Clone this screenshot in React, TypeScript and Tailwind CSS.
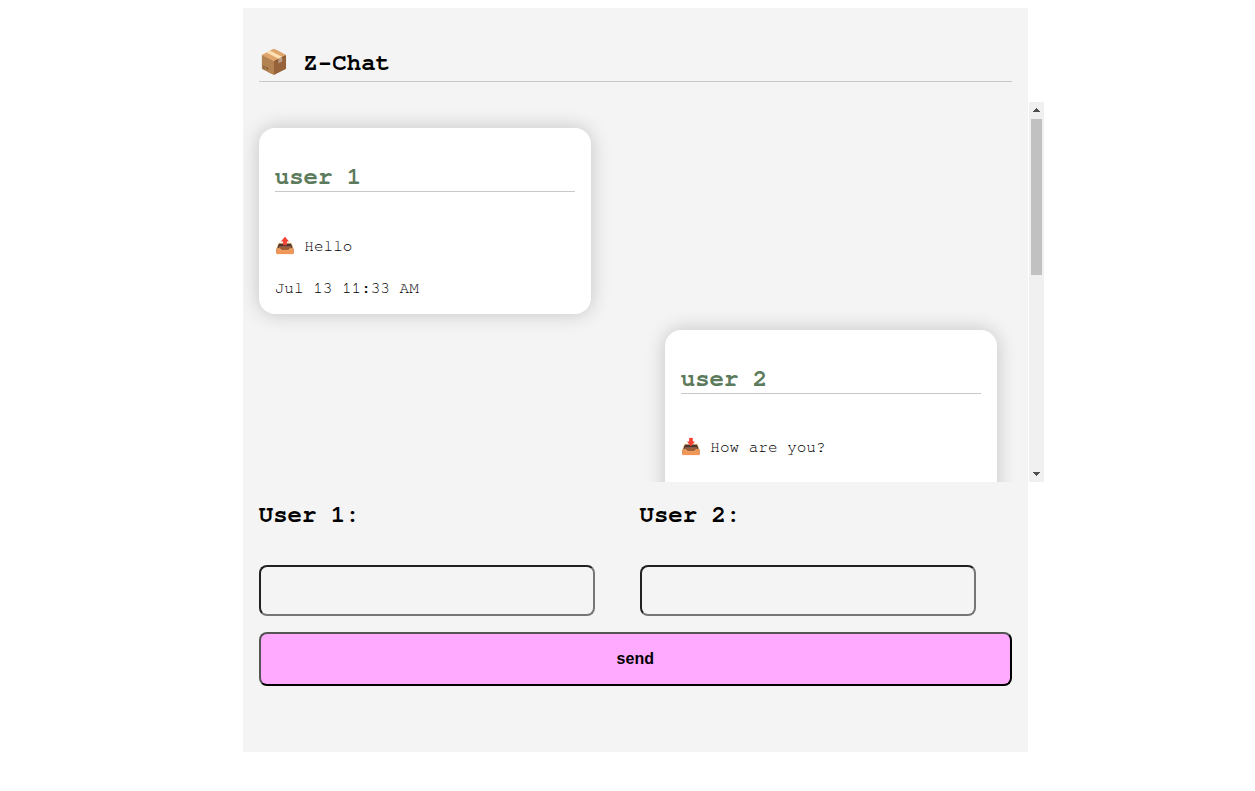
type Message = { user: string; icon: string; text: string; time?: string; mine: boolean };

const messages: Message[] = [
  { user: "user 1", icon: "📤", text: "Hello", time: "Jul 13 11:33 AM", mine: true },
  { user: "user 2", icon: "📥", text: "How are you?", mine: false },
];

function MessageCard({ user, icon, text, time, mine }: Message) {
  return (
    <article
      className={
        "h-[185.6px] w-[332px] shrink-0 rounded-2xl bg-white px-4 shadow-[0_0_20px_rgba(0,0,0,0.2)] " +
        (mine ? "self-start" : "mr-[15px] self-end")
      }
    >
      <h2 className="h-16 border-b border-[#c8c8c8] pt-9 text-2xl leading-[27px] font-bold text-[#5c7a5c]">{user}</h2>
      <p className="pt-[44.6px] text-base leading-[19px]">
        {icon} {text}
      </p>
      {time && <p className="pt-[23.4px] text-base leading-[19px]">{time}</p>}
    </article>
  );
}

function Scrollbar() {
  return (
    <div className="ml-px flex h-full w-[15px] shrink-0 flex-col items-center bg-[#f0f0f0]">
      <svg className="h-[17px] w-[15px] shrink-0" viewBox="0 0 15 17" shapeRendering="crispEdges" fill="#505050">
        <path d="M7 6h1v1h1v1h1v1h1v1H4V9h1V8h1V7h1z" />
      </svg>
      <div className="h-[156px] w-[11px] bg-[#c1c1c1]" />
      <svg className="mt-auto h-[17px] w-[15px] shrink-0" viewBox="0 0 15 17" shapeRendering="crispEdges" fill="#505050">
        <path d="M4 7h7v1h-1v1H9v1H8v1H7v-1H6V9H5V8H4z" />
      </svg>
    </div>
  );
}

function Field({ label }: { label: string }) {
  return (
    <label className="block">
      <span className="block h-[63px] text-2xl leading-[27px] font-bold">{label}</span>
      <input
        type="text"
        className="block h-[51px] w-[336px] rounded-lg border-2 border-t-[#212121] border-r-[#767676] border-b-[#767676] border-l-[#212121] bg-transparent px-4 text-base outline-none"
      />
    </label>
  );
}

export default function App() {
  return (
    <main className="mt-2 ml-[242.75px] h-[744px] w-[785px] bg-[#f4f4f4] px-4 font-['FreeMono','TeX_Gyre_Cursor','Courier_Prime',monospace] text-black">
      <h1 className="h-[74px] border-b border-[#c8c8c8] pt-[42px] text-2xl leading-[27px] font-bold tracking-[0.1px]">
        📦 Z<span className="font-['Courier_Prime',monospace]">-</span>Chat
      </h1>
      <section className="mt-5 -ml-4 flex h-[380px] w-[801px]">
        <div className="flex w-[785px] shrink-0 flex-col gap-4 overflow-hidden px-4 pt-[26px]">
          {messages.map((m) => (
            <MessageCard key={m.user} {...m} />
          ))}
        </div>
        <Scrollbar />
      </section>
      <form className="pt-5" onSubmit={(e) => e.preventDefault()}>
        <div className="grid grid-cols-[336px_336px] gap-x-[44.8px]">
          <Field label="User 1:" />
          <Field label="User 2:" />
        </div>
        <button
          type="submit"
          className="mt-4 block h-[54px] w-full rounded-lg border-2 border-t-[#555] border-r-black border-b-black border-l-[#555] bg-[#ffaaff] font-['Liberation_Sans',Arial,sans-serif] text-base font-bold"
        >
          send
        </button>
      </form>
    </main>
  );
}
